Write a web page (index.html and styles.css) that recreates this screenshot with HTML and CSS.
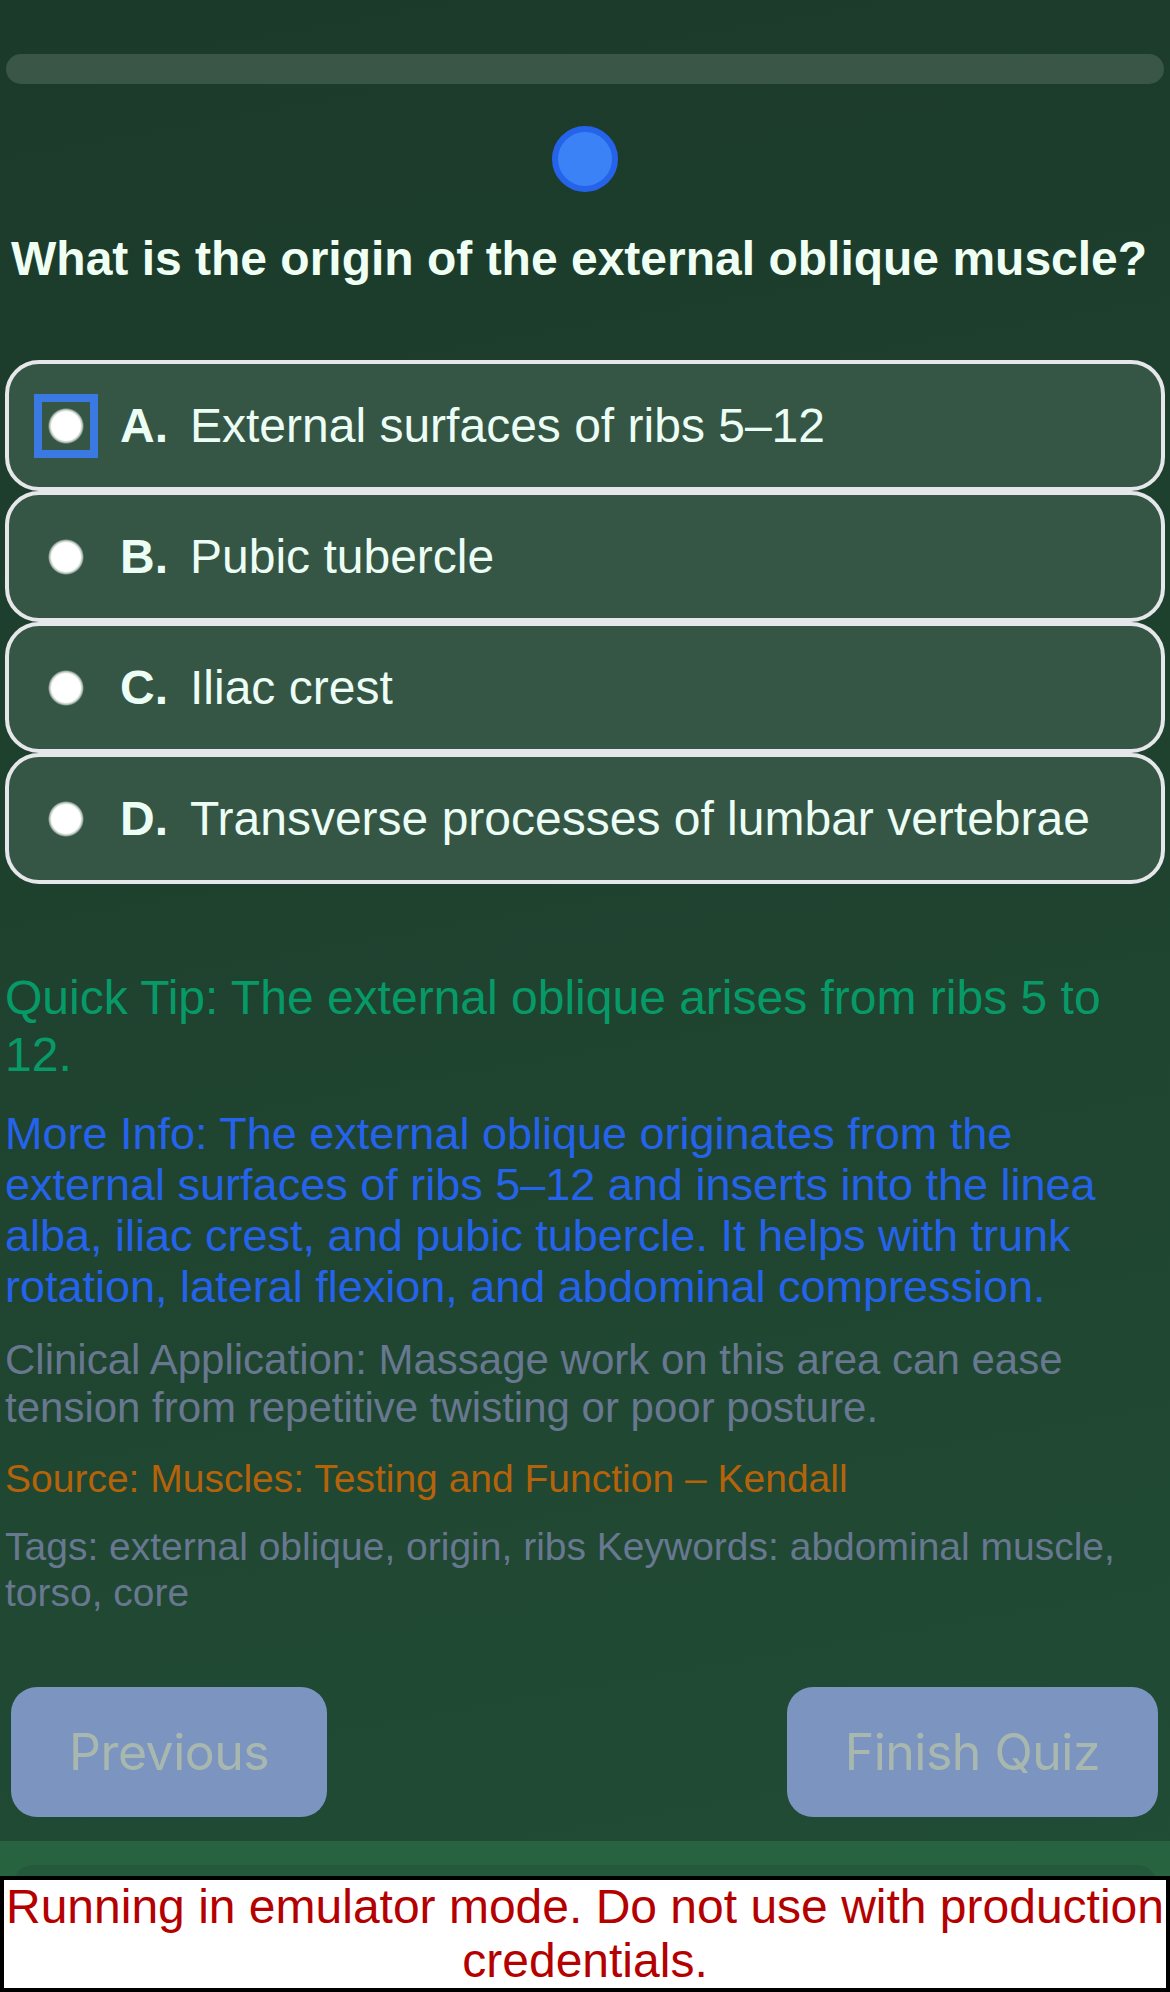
FILE: index.html
```html
<!DOCTYPE html>
<html lang="en">
<head>
<meta charset="utf-8">
<title>Quiz</title>
<link rel="stylesheet" href="styles.css">
</head>
<body>
<div class="page">
  <div class="progress"></div>
  <div class="dots"><span class="dot"></span></div>
  <h1 class="question">What is the origin of the external oblique muscle?</h1>
  <div class="options">
    <label class="option"><span class="radio focused"></span><span class="letter">A.</span><span class="opt-text">External surfaces of ribs 5–12</span></label>
    <label class="option"><span class="radio"></span><span class="letter">B.</span><span class="opt-text">Pubic tubercle</span></label>
    <label class="option"><span class="radio"></span><span class="letter">C.</span><span class="opt-text">Iliac crest</span></label>
    <label class="option"><span class="radio"></span><span class="letter">D.</span><span class="opt-text">Transverse processes of lumbar vertebrae</span></label>
  </div>
  <p class="tip">Quick Tip: The external oblique arises from ribs 5 to 12.</p>
  <p class="info">More Info: The external oblique originates from the external surfaces of ribs 5–12 and inserts into the linea alba, iliac crest, and pubic tubercle. It helps with trunk rotation, lateral flexion, and abdominal compression.</p>
  <p class="clinical">Clinical Application: Massage work on this area can ease tension from repetitive twisting or poor posture.</p>
  <p class="source">Source: Muscles: Testing and Function – Kendall</p>
  <p class="tags">Tags: external oblique, origin, ribs Keywords: abdominal muscle, torso, core</p>
  <div class="nav">
    <button class="btn btn-prev">Previous</button>
    <button class="btn btn-finish">Finish Quiz</button>
  </div>
</div>
<footer class="bottom-bar"><div class="bottom-card"></div></footer>
<div class="emulator">Running in emulator mode. Do not use with production credentials.</div>
</body>
</html>
```
FILE: styles.css
```css
html, body {
  margin: 0;
  padding: 0;
}
body {
  background: linear-gradient(170deg, #1c3a2a 0%, #1f4430 55%, #214d35 100%);
  font-family: "Liberation Sans", Arial, sans-serif;
  min-height: 1992px;
}
.page {
  padding: 54px 5px 0 5px;
}
.progress {
  height: 30px;
  margin: 0 1px 0 1px;
  border-radius: 15px;
  background: #3a5647;
}
.dots {
  display: flex;
  justify-content: center;
  margin-top: 42px;
}
.dot {
  width: 66px;
  height: 66px;
  box-sizing: border-box;
  border-radius: 50%;
  background: #3b82f6;
  border: 6px solid #2563eb;
}
.question {
  margin: 39px 0 0 0;
  padding: 0 6px;
  font-size: 48px;
  line-height: 55px;
  font-weight: bold;
  color: #f0fff4;
}
.options {
  margin-top: 74px;
  display: flex;
  flex-direction: column;
}
.option {
  box-sizing: border-box;
  height: 131px;
  display: flex;
  align-items: center;
  padding-left: 39px;
  border: 4px solid #e5e7eb;
  border-radius: 34px;
  background: #355644;
  color: #ecfdf5;
  font-size: 48px;
  line-height: 55px;
}
.radio {
  flex: none;
  width: 36px;
  height: 36px;
  border-radius: 50%;
  margin-right: 36px;
  background: radial-gradient(circle closest-side, #ffffff 80%, rgba(255,255,255,0.6) 92%, rgba(255,255,255,0) 100%);
}
.radio.focused {
  border-radius: 0;
  outline: 8px solid #3a78e2;
  outline-offset: 6px;
}
.letter {
  font-weight: bold;
  margin-right: 22px;
}
.tip {
  margin: 85px 0 0 0;
  font-size: 48px;
  line-height: 57px;
  color: #079a68;
}
.info {
  margin: 25px 0 0 0;
  font-size: 45px;
  line-height: 51px;
  color: #2563eb;
}
.clinical {
  margin: 24px 0 0 0;
  font-size: 42px;
  line-height: 48px;
  color: #687890;
}
.source {
  margin: 24px 0 0 0;
  font-size: 39px;
  line-height: 45px;
  color: #b4630a;
}
.tags {
  margin: 23px 0 0 0;
  font-size: 39px;
  line-height: 46px;
  color: #687890;
}
.nav {
  margin-top: 71px;
  padding: 0 7px 0 6px;
  display: flex;
  justify-content: space-between;
}
.btn {
  height: 130px;
  padding: 0 58px;
  border: none;
  border-radius: 26px;
  background: #7c94c0;
  color: #a9b8af;
  font-family: Inter, "Noto Sans", sans-serif;
  font-size: 50px;
  letter-spacing: -0.5px;
}
.bottom-bar {
  margin-top: 24px;
  height: 151px;
  background: #27633f;
  padding: 24px 13px 0 13px;
  box-sizing: border-box;
}
.bottom-card {
  height: 100%;
  border-radius: 20px 20px 0 0;
  background: #245a3b;
}
.emulator {
  position: fixed;
  left: 0;
  right: 0;
  bottom: 0;
  background: #ffffff;
  border: 4px solid #000000;
  color: #b50000;
  font-family: "Liberation Sans", Arial, sans-serif;
  font-size: 48px;
  line-height: 54px;
  text-align: center;
}
```
